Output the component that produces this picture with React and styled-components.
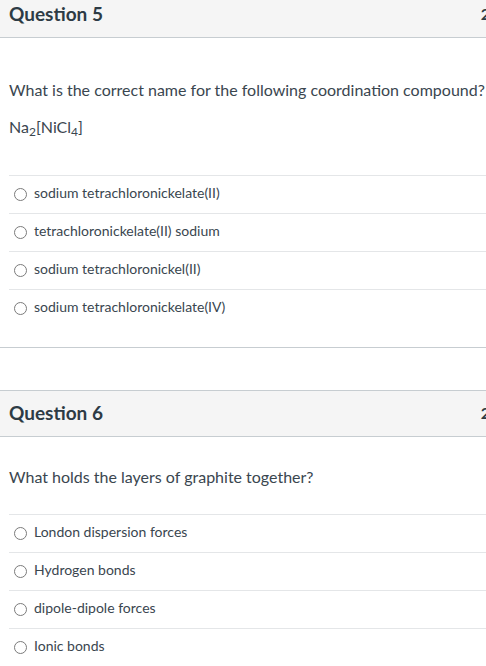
import styled, { createGlobalStyle } from "styled-components";

const GlobalStyle = createGlobalStyle`
  html, body {
    margin: 0;
    padding: 0;
    background: #fff;
    overflow: hidden;
  }
  body {
    font-family: Lato, "Liberation Sans", sans-serif;
    color: #2d3b45;
  }
`;

const questions = [
  {
    id: 5,
    points: "2 pts",
    first: true,
    text: "What is the correct name for the following coordination compound?",
    formula: true,
    answers: [
      "sodium tetrachloronickelate(II)",
      "tetrachloronickelate(II) sodium",
      "sodium tetrachloronickel(II)",
      "sodium tetrachloronickelate(IV)",
    ],
  },
  {
    id: 6,
    points: "2 pts",
    text: "What holds the layers of graphite together?",
    answers: [
      "London dispersion forces",
      "Hydrogen bonds",
      "dipole-dipole forces",
      "Ionic bonds",
    ],
  },
];

const App = () => {
  return (
    <>
      <GlobalStyle />
      <Page>
        {questions.map((q) => (
          <QuestionPanel key={q.id}>
            <Header>
              <Title>Question {q.id}</Title>
              <Points>{q.points}</Points>
            </Header>
            <Body $first={q.first}>
              <Prompt>{q.text}</Prompt>
              {q.formula && (
                <Formula>
                  Na<sub>2</sub>[NiCl<sub>4</sub>]
                </Formula>
              )}
              <Answers $first={q.first}>
                {q.answers.map((a) => (
                  <Answer key={a}>
                    <Radio type="radio" name={`q${q.id}`} />
                    <AnswerText>{a}</AnswerText>
                  </Answer>
                ))}
              </Answers>
            </Body>
          </QuestionPanel>
        ))}
      </Page>
    </>
  );
};

export default App;

const Page = styled.div`
  width: 525px;
  margin-top: -9px;
`;

const QuestionPanel = styled.div`
  border-top: 1px solid #c7cdd1;
  border-bottom: 1px solid #c7cdd1;
  margin-bottom: 42px;
`;

const Header = styled.div`
  height: 46px;
  box-sizing: border-box;
  padding: 0 9px 2px;
  background: #f5f5f5;
  border-bottom: 1px solid #c7cdd1;
  display: flex;
  align-items: center;
  justify-content: space-between;
`;

const Title = styled.div`
  font-size: 19px;
  font-weight: 700;
  color: #2d3b45;
`;

const Points = styled.div`
  font-size: 16px;
  font-weight: 700;
  color: #2d3b45;
`;

const Body = styled.div`
  padding: ${(p) => (p.$first ? "40px" : "28px")} 0 20px 9px;
`;

const Prompt = styled.div`
  font-size: 16px;
  line-height: 24px;
  white-space: nowrap;
  color: #3a464f;
`;

const Formula = styled.div`
  margin-top: 13px;
  font-size: 16px;
  line-height: 24px;
  color: #3a464f;

  sub {
    font-size: 12px;
    line-height: 0;
    vertical-align: -3px;
  }
`;

const Answers = styled.div`
  margin-top: ${(p) => (p.$first ? "36px" : "25px")};
`;

const Answer = styled.label`
  display: flex;
  align-items: center;
  height: 37px;
  box-sizing: content-box;
  padding: 0 0 0 5px;
  border-top: 1px solid #e4e6e8;
`;

const Radio = styled.input`
  appearance: none;
  width: 13px;
  height: 13px;
  margin: 0 7px 0 0;
  border: 1px solid #7b7b7b;
  border-radius: 50%;
  background: #fff;
  box-sizing: border-box;
`;

const AnswerText = styled.span`
  font-size: 14px;
  color: #3a464f;
  position: relative;
  top: -2px;
`;
